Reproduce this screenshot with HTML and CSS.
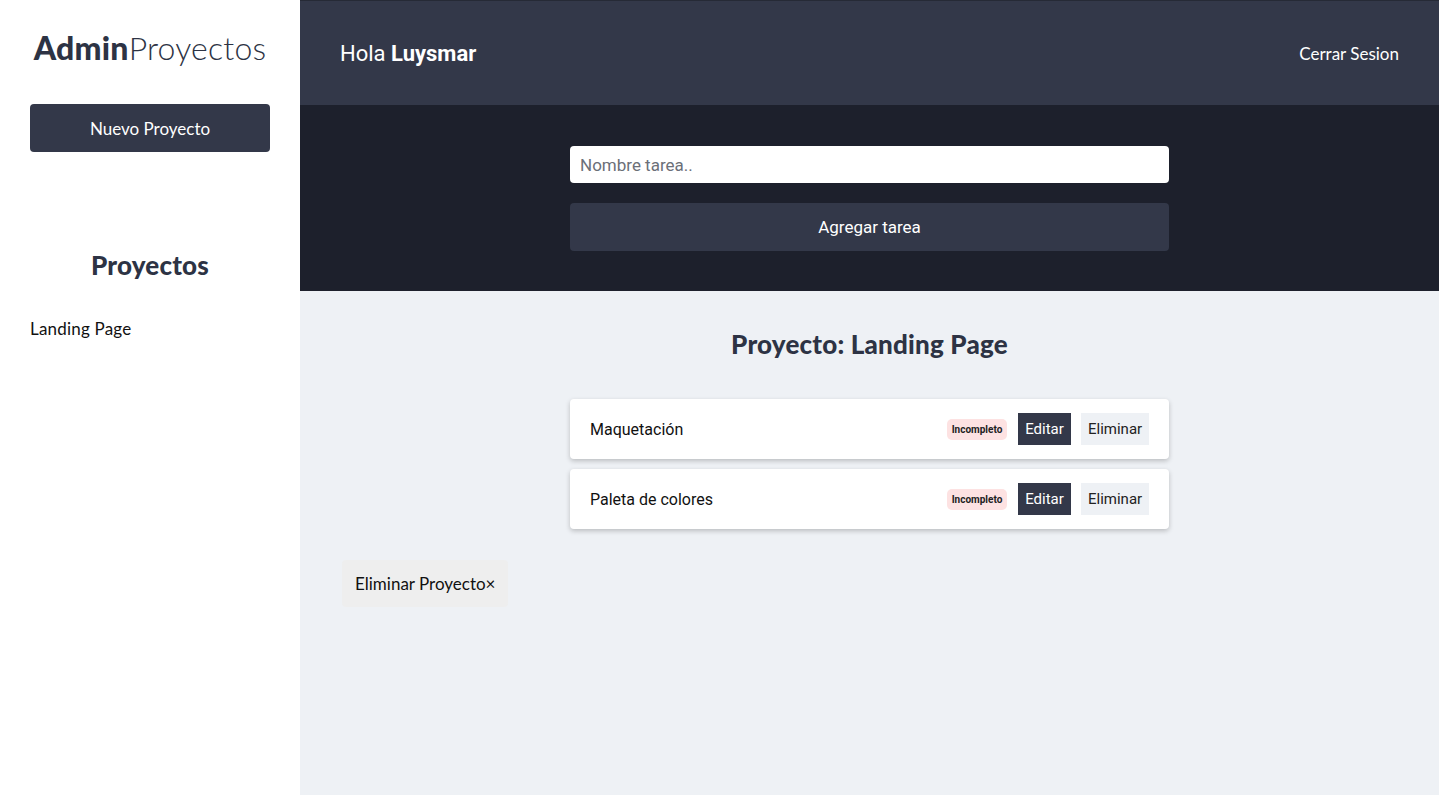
FILE: index.html
```html
<!DOCTYPE html>
<html>
<head>
    <title>AdminProyectos</title>
    <link rel="stylesheet" href="styles.css">
</head>
<body>
    <div class="app">
        <aside class="sidebar">
            <h1 class="logo"><span class="logo-bold">Admin</span>Proyectos</h1>
            <button type="button" class="btn-new">Nuevo Proyecto</button>
            <h2 class="sidebar-title">Proyectos</h2>
            <ul class="project-list">
                <li>Landing Page</li>
            </ul>
        </aside>

        <div class="main">
            <header class="topbar">
                <p class="greeting">Hola <strong>Luysmar</strong></p>
                <button type="button" class="logout">Cerrar Sesion</button>
            </header>

            <section class="task-form-area">
                <form class="task-form">
                    <input type="text" class="task-input" placeholder="Nombre tarea..">
                    <button type="submit" class="btn-add">Agregar tarea</button>
                </form>
            </section>

            <section class="content">
                <h2 class="project-title">Proyecto: Landing Page</h2>
                <ul class="task-list">
                    <li class="task">
                        <span class="task-name">Maquetación</span>
                        <div class="task-actions">
                            <span class="badge">Incompleto</span>
                            <button type="button" class="btn-edit">Editar</button>
                            <button type="button" class="btn-delete">Eliminar</button>
                        </div>
                    </li>
                    <li class="task">
                        <span class="task-name">Paleta de colores</span>
                        <div class="task-actions">
                            <span class="badge">Incompleto</span>
                            <button type="button" class="btn-edit">Editar</button>
                            <button type="button" class="btn-delete">Eliminar</button>
                        </div>
                    </li>
                </ul>
                <button type="button" class="btn-delete-project">Eliminar Proyecto&times;</button>
            </section>
        </div>
    </div>
</body>
</html>
```

FILE: styles.css
```css
* {
    box-sizing: border-box;
}
body {
    margin: 0;
    font-family: "Lato", "Open Sans", sans-serif;
    color: #1f2430;
    background: #fff;
}
button {
    font-family: inherit;
    cursor: pointer;
    border: none;
}
.app {
    display: flex;
    height: 795px;
    overflow: hidden;
}
.sidebar {
    width: 300px;
    flex-shrink: 0;
    background: #fff;
    padding: 30px 30px 0;
}
.logo {
    margin: 0;
    text-align: center;
    font-size: 32px;
    font-weight: 300;
    color: #2d3344;
    line-height: 36px;
    letter-spacing: 0.2px;
}
.logo-bold {
    font-weight: 900;
}
.btn-new {
    display: block;
    width: 100%;
    height: 48px;
    margin-top: 38px;
    background: #333849;
    color: #fff;
    font-size: 17px;
    border-radius: 4px;
}
.sidebar-title {
    margin: 98px 0 0;
    text-align: center;
    font-size: 26px;
    font-weight: 900;
    color: #2d3344;
    line-height: 30px;
    letter-spacing: 0.2px;
}
.project-list {
    list-style: none;
    margin: 38px 0 0;
    padding: 0;
    font-size: 17px;
    color: #111;
    letter-spacing: 0.2px;
}
.main {
    flex: 1;
    display: flex;
    flex-direction: column;
    background: #eef1f5;
}
.topbar {
    height: 105px;
    background: #333849;
    border-top: 1px solid #262a36;
    display: flex;
    align-items: center;
    justify-content: space-between;
    padding: 0 40px;
}
.greeting {
    margin: 0;
    font-family: "Roboto", sans-serif;
    font-size: 22px;
    color: #fff;
}
.logout {
    background: none;
    color: #fff;
    font-size: 17px;
    padding: 0;
}
.task-form-area {
    background: #1d202c;
    padding: 41px 0 40px;
}
.task-form {
    width: 599px;
    margin: 0 auto;
    display: flex;
    flex-direction: column;
    gap: 20px;
}
.task-input {
    height: 37px;
    border: none;
    border-radius: 4px;
    padding: 0 10px;
    font-family: "Roboto", sans-serif;
    font-size: 17px;
    color: #333;
    background: #fff;
}
.task-input::placeholder {
    color: #6b6f78;
}
.btn-add {
    height: 48px;
    background: #333849;
    color: #fff;
    border-radius: 4px;
    font-family: "Roboto", sans-serif;
    font-size: 17px;
}
.content {
    flex: 1;
    padding: 38px 0 0 42px;
}
.project-title {
    margin: 0 42px 0 0;
    text-align: center;
    font-size: 26px;
    font-weight: 900;
    color: #2d3344;
    line-height: 30px;
    letter-spacing: 0.2px;
}
.task-list {
    list-style: none;
    margin: 40px auto 0;
    padding: 0;
    width: 599px;
    position: relative;
    left: -21px;
    display: flex;
    flex-direction: column;
    gap: 10px;
}
.task {
    height: 60px;
    background: #fff;
    border-radius: 4px;
    box-shadow: 0 2px 5px rgba(0, 0, 0, 0.22);
    display: flex;
    align-items: center;
    justify-content: space-between;
    padding: 0 20px;
    font-family: "Roboto", sans-serif;
}
.task-name {
    font-size: 16px;
    color: #111;
}
.task-actions {
    display: flex;
    align-items: center;
    gap: 10px;
}
.badge {
    width: 60px;
    height: 21px;
    line-height: 21px;
    text-align: center;
    margin-right: 1px;
    background: #fde2e2;
    color: #222;
    font-size: 10px;
    font-weight: 700;
    border-radius: 5px;
}
.btn-edit,
.btn-delete {
    height: 32px;
    padding: 0 7px;
    font-family: "Roboto", sans-serif;
    font-size: 15px;
}
.btn-edit {
    width: 53px;
    background: #333849;
    color: #fff;
}
.btn-delete {
    width: 68px;
    background: #eef1f5;
    color: #222;
}
.btn-delete-project {
    margin-top: 31px;
    height: 47px;
    padding: 0 13px;
    background: #eeeeee;
    border-radius: 4px;
    font-size: 17px;
    color: #111;
}
```
